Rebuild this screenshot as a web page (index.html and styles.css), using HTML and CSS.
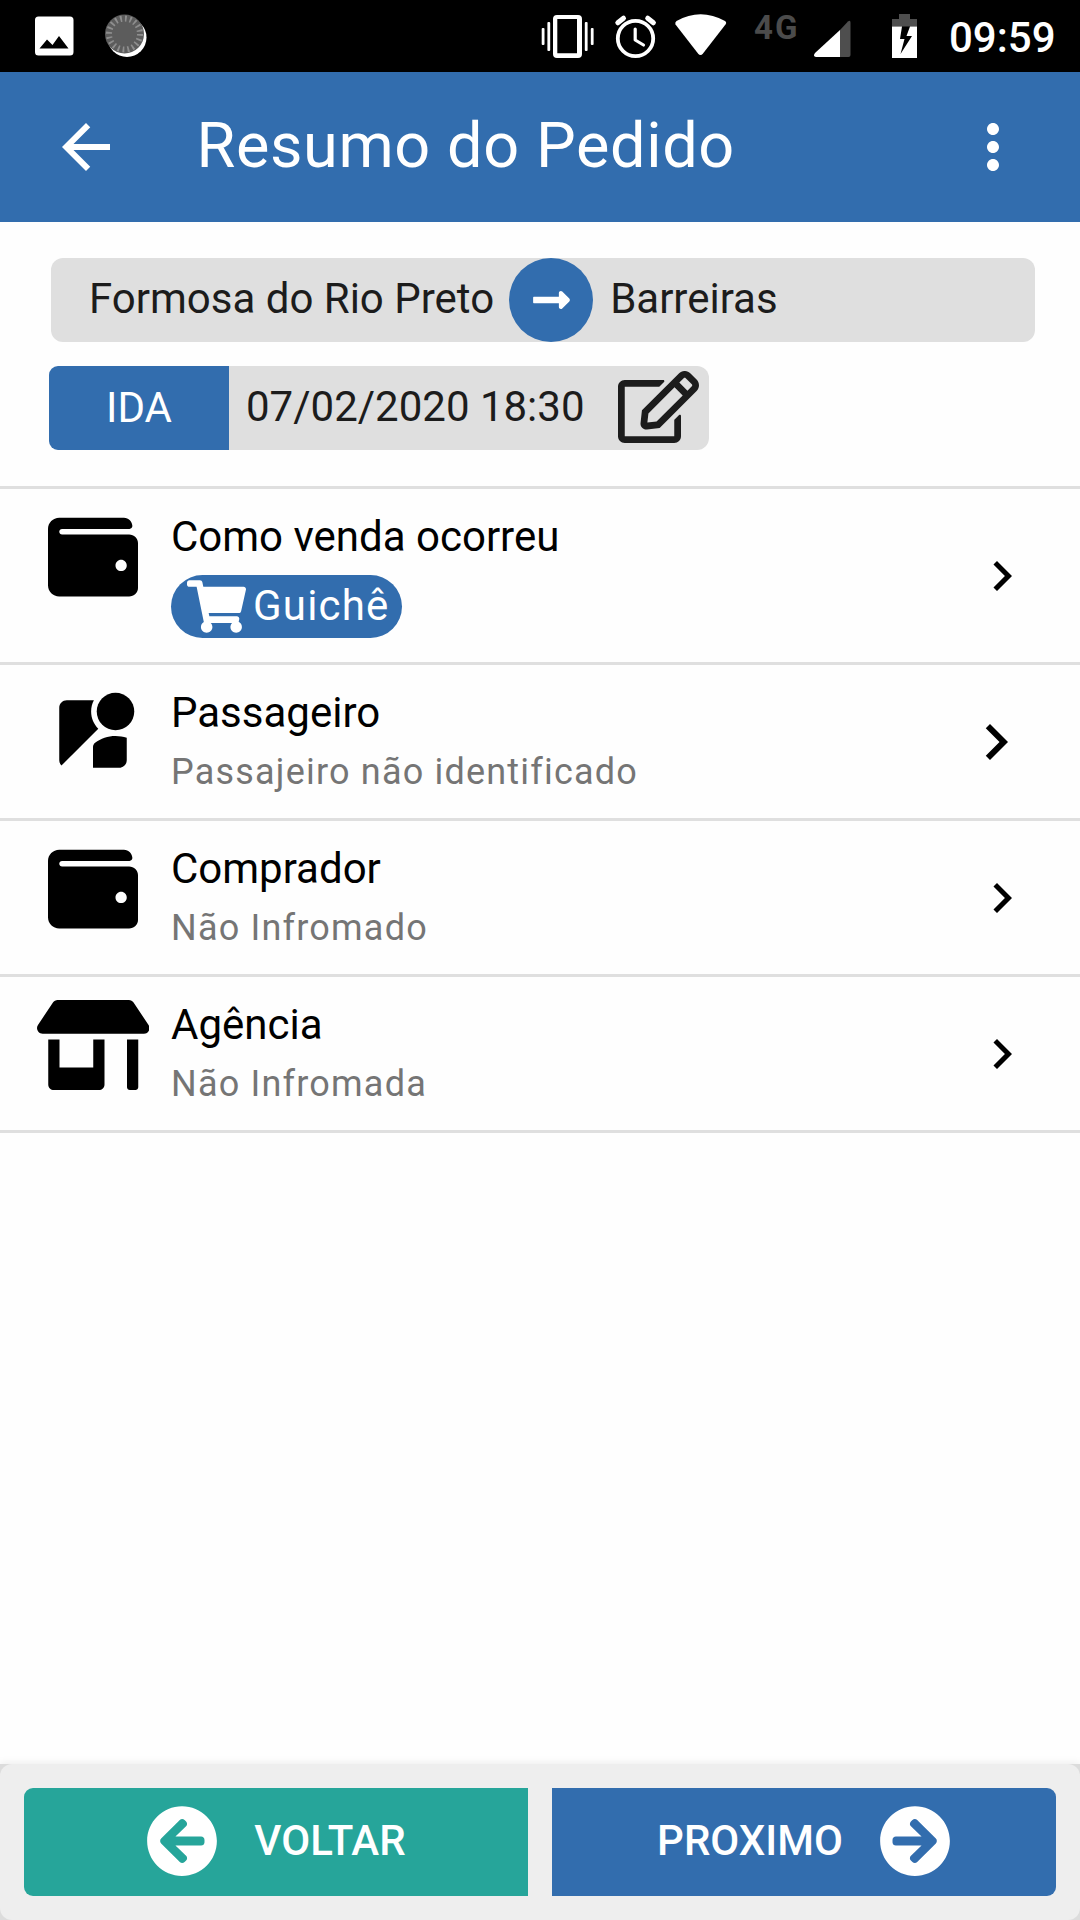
FILE: index.html
```html
<!DOCTYPE html>
<html lang="pt-BR">
<head>
<meta charset="utf-8">
<title>Resumo do Pedido</title>
<link rel="stylesheet" href="styles.css">
</head>
<body>
<svg width="0" height="0" class="defs" aria-hidden="true">
  <symbol id="wallet" viewBox="0 0 512 512"><path d="M461.2 128H80c-8.84 0-16-7.16-16-16s7.16-16 16-16h384c8.84 0 16-7.16 16-16 0-26.51-21.49-48-48-48H64C28.65 32 0 60.65 0 96v320c0 35.35 28.65 64 64 64h397.2c28.02 0 50.8-21.53 50.8-48V176c0-26.47-22.78-48-50.8-48zM416 336c-17.67 0-32-14.33-32-32s14.33-32 32-32 32 14.33 32 32-14.33 32-32 32z"/></symbol>
  <symbol id="chevron" viewBox="0 0 24 24"><path d="M10 6L8.59 7.41 13.17 12l-4.58 4.59L10 18l6-6z"/></symbol>
  <symbol id="circle-left" viewBox="0 0 512 512"><path d="M256 504C119 504 8 393 8 256S119 8 256 8s248 111 248 248-111 248-248 248zm28.9-143.6L209.4 288H392c13.3 0 24-10.7 24-24v-16c0-13.3-10.7-24-24-24H209.4l75.5-72.4c9.7-9.3 9.9-24.8.4-34.3l-11-10.9c-9.4-9.4-24.6-9.4-33.9 0L107.7 239c-9.4 9.4-9.4 24.6 0 33.9l132.7 132.7c9.4 9.4 24.6 9.4 33.9 0l11-10.9c9.5-9.5 9.3-25-.4-34.3z"/></symbol>
</svg>

<div class="status">
  <svg class="status-left" viewBox="34 0 120 72" width="120" height="72">
    <path fill="#fff" fill-rule="evenodd" d="M38.500 16.500h31.500a3.500 3.500 0 0 1 3.500 3.500v32a3.500 3.500 0 0 1-3.500 3.500h-31.500a3.500 3.500 0 0 1-3.500-3.500v-32a3.500 3.500 0 0 1 3.500-3.500zM39.500 48.500h29l-9.500-12.500-6.500 9-5.500-5.500z"/>
    <circle cx="127" cy="37.500" r="19.500" fill="#fff"/>
    <circle cx="124.500" cy="34" r="19.500" fill="#5c5c5c"/>
    <circle cx="124.500" cy="34" r="15.500" fill="none" stroke="#8e8e8e" stroke-width="6" stroke-dasharray="1.800 3.069"/>
  </svg>
  <div class="status-right">
    <svg class="status-icons" viewBox="540 0 190 72" width="190" height="72">
      <g fill="#fff">
        <path fill-rule="evenodd" d="M557 15h21a4 4 0 0 1 4 4v35a4 4 0 0 1-4 4h-21a4 4 0 0 1-4-4v-35a4 4 0 0 1 4-4zM557.300 19v34.200h19.700v-34.200z"/>
        <rect x="547.400" y="22" width="2.800" height="29" rx="1"/><rect x="541.700" y="28" width="2.800" height="17" rx="1"/>
        <rect x="584.800" y="22" width="2.800" height="29" rx="1"/><rect x="590.800" y="28" width="2.800" height="17" rx="1"/>
        <path d="M675.500 24.500Q674.500 22.500 676.500 21Q700.500 7.500 725 21Q727 22.500 725.500 24.500L703 53.500Q700.500 56.500 698 53.500z"/>
      </g>
      <g fill="none" stroke="#fff">
        <circle cx="635.500" cy="38.500" r="17.700" stroke-width="3.800"/>
        <path stroke-width="3.200" stroke-linecap="round" stroke-linejoin="round" d="M635.200 29v11l8.300 5"/>
        <path stroke-width="5" stroke-linecap="round" d="M617.800 22.800l5.700-4.600M653.400 22.800l-5.700-4.600"/>
      </g>
    </svg>
    <span class="net">4G</span>
    <svg class="status-icons" viewBox="806 0 114 72" width="114" height="72">
      <path fill="#4e4e4e" d="M840 30l8-8.500q2.500-2 2.500 1v32.500q0 2-2 2h-8.500z"/>
      <path fill="#fff" d="M840 30v27h-24q-3.500-.5-1-4z"/>
      <path fill="#4e4e4e" d="M899 14h11v5h7v7.500h-25v-7.500h7z"/>
      <path fill="#fff" fill-rule="evenodd" d="M892 26.500h25v31.500h-25zM902 26.500l-2 12.500h4.500l-4 15 11.500-18h-5.500l3.500-9.500z"/>
    </svg>
    <span class="clock">09:59</span>
  </div>
</div>

<header class="appbar">
  <svg viewBox="0 0 24 24" width="72" height="72"><path fill="#fff" d="M20 11H7.830l5.590-5.590L12 4l-8 8 8 8 1.410-1.410L7.830 13H20v-2z"/></svg>
  <h1>Resumo do Pedido</h1>
  <svg viewBox="0 0 24 24" width="72" height="72"><path fill="#fff" d="M12 8c1.100 0 2-.9 2-2s-.9-2-2-2-2 .9-2 2 .9 2 2 2zm0 2c-1.100 0-2 .9-2 2s.9 2 2 2 2-.9 2-2-.9-2-2-2zm0 6c-1.100 0-2 .9-2 2s.9 2 2 2 2-.9 2-2-.9-2-2-2z"/></svg>
</header>

<section class="trip">
  <div class="route">
    <span>Formosa do Rio Preto</span>
    <span class="route-arrow"><svg viewBox="0 0 448 512" width="37" height="42"><path fill="#fff" d="M313.941 216H12c-6.627 0-12 5.373-12 12v56c0 6.627 5.373 12 12 12h301.941v46.059c0 21.382 25.851 32.090 40.971 16.971l86.059-86.059c9.373-9.373 9.373-24.569 0-33.941l-86.059-86.059c-15.119-15.119-40.971-4.411-40.971 16.971V216z"/></svg></span>
    <span>Barreiras</span>
  </div>
  <div class="date">
    <span class="leg">IDA</span>
    <span class="when">07/02/2020 18:30</span>
    <svg viewBox="0 0 576 512" width="81" height="72"><path fill="#1c1c1c" d="M402.300 344.900l32-32c5-5 13.700-1.500 13.700 5.700V464c0 26.500-21.500 48-48 48H48c-26.500 0-48-21.500-48-48V112c0-26.500 21.500-48 48-48h273.500c7.100 0 10.700 8.600 5.700 13.700l-32 32c-1.500 1.500-3.500 2.300-5.700 2.300H48v352h352V350.500c0-2.100.8-4.100 2.300-5.600zm156.600-201.800L296.300 405.700l-90.400 10c-26.200 2.900-48.500-19.200-45.600-45.600l10-90.400L432.900 17.100c22.900-22.900 59.900-22.900 82.700 0l43.200 43.200c22.900 22.900 22.900 60 .1 82.800zM460.100 174L402 115.900 216.200 301.800l-7.300 65.300 65.300-7.300L460.100 174zm64.800-79.700l-43.200-43.200c-4.100-4.100-10.800-4.100-14.800 0L436 82l58.100 58.100 30.900-30.900c4-4.200 4-10.800-.1-14.900z"/></svg>
  </div>
</section>

<main class="list">
  <div class="row row-sale">
    <div class="icon"><svg width="90" height="90"><use href="#wallet"/></svg></div>
    <div class="text">
      <div class="title">Como venda ocorreu</div>
      <div class="chip">
        <svg viewBox="0 0 576 512" width="59" height="53"><path fill="#fff" d="M528.120 301.319l47.273-208C578.806 78.301 567.391 64 551.990 64H159.208l-9.166-44.810C147.758 8.021 137.930 0 126.529 0H24C10.745 0 0 10.745 0 24v16c0 13.255 10.745 24 24 24h69.883l70.248 343.435C147.325 417.100 136 435.222 136 456c0 30.928 25.072 56 56 56s56-25.072 56-56c0-15.674-6.447-29.835-16.824-40h209.647C430.447 426.165 424 440.326 424 456c0 30.928 25.072 56 56 56s56-25.072 56-56c0-22.172-12.888-41.332-31.579-50.405l5.517-24.276c3.413-15.018-8.002-29.319-23.403-29.319H218.117l-6.545-32h293.145c11.206 0 20.920-7.754 23.403-18.681z"/></svg>
        <span>Guichê</span>
      </div>
    </div>
    <svg class="chevron" width="60" height="60"><use href="#chevron"/></svg>
  </div>
  <div class="row">
    <div class="icon icon-person"><svg viewBox="0 0 24 24" width="90" height="90"><circle cx="18" cy="6" r="5"/><path d="M12.560 14.330c-.34.270-.56.700-.56 1.170V21h7c1.100 0 2-.9 2-2v-5.980c-.94-.33-1.950-.52-3-.52-2.030 0-3.930.7-5.440 1.830zM11.500 6c0-1.080.27-2.100.74-3H5c-1.100 0-2 .9-2 2v14c0 .55.23 1.050.59 1.410l9.820-9.820C12.230 9.420 11.500 7.800 11.500 6z"/></svg></div>
    <div class="text">
      <div class="title">Passageiro</div>
      <div class="sub">Passajeiro não identificado</div>
    </div>
    <svg class="chevron" width="72" height="72"><use href="#chevron"/></svg>
  </div>
  <div class="row">
    <div class="icon"><svg width="90" height="90"><use href="#wallet"/></svg></div>
    <div class="text">
      <div class="title">Comprador</div>
      <div class="sub">Não Infromado</div>
    </div>
    <svg class="chevron" width="60" height="60"><use href="#chevron"/></svg>
  </div>
  <div class="row">
    <div class="icon"><svg viewBox="0 0 640 512" width="112.500" height="90"><path d="M320 384H128V224H64v256c0 17.700 14.300 32 32 32h256c17.700 0 32-14.300 32-32V224h-64v160zm314.600-241.800l-85.300-128c-6-8.900-16-14.200-26.700-14.200H117.400c-10.700 0-20.700 5.300-26.600 14.200l-85.300 128c-14.200 21.300 1 49.800 26.600 49.800H608c25.500 0 40.700-28.500 26.600-49.800zM512 496c0 8.800 7.200 16 16 16h32c8.800 0 16-7.200 16-16V224h-64v272z"/></svg></div>
    <div class="text">
      <div class="title">Agência</div>
      <div class="sub">Não Infromada</div>
    </div>
    <svg class="chevron" width="60" height="60"><use href="#chevron"/></svg>
  </div>
</main>

<footer class="footer">
  <div class="actions">
    <div class="btn btn-back"><svg width="72" height="72"><use href="#circle-left"/></svg><span>VOLTAR</span></div>
    <div class="btn btn-next"><span>PROXIMO</span><svg class="flip" width="72" height="72"><use href="#circle-left"/></svg></div>
  </div>
</footer>
</body>
</html>
```
FILE: styles.css
```css
* { box-sizing: border-box; }
body {
  margin: 0;
  width: 1080px;
  height: 1920px;
  display: flex;
  flex-direction: column;
  background: #fefefe;
  color: #1c1c1c;
  font: 400 42px/48px Roboto, sans-serif;
  overflow: hidden;
}
svg { display: block; flex: none; }
.defs { position: absolute; }

.status {
  height: 72px;
  flex: none;
  display: flex;
  justify-content: space-between;
  background: #000;
  color: #fff;
}
.status-left { margin-left: 34px; }
.status-right { display: flex; }
.net {
  width: 52px;
  margin: 7px 0 0 24px;
  font-size: 33px;
  line-height: 42px;
  font-weight: 700;
  letter-spacing: 2px;
  color: #4b4b4b;
}
.clock {
  width: 131px;
  margin-left: 29px;
  line-height: 75px;
  font-weight: 500;
}

.appbar {
  height: 150px;
  flex: none;
  display: flex;
  align-items: center;
  padding: 0 51px 0 50px;
  background: #326dae;
  color: #fff;
}
.appbar h1 {
  flex: 1;
  margin: 0 0 0 74.500px;
  padding-bottom: 3px;
  font-size: 63px;
  line-height: 72px;
  font-weight: 400;
  letter-spacing: .62px;
}

.trip {
  flex: none;
  padding: 36px 45px 36px 49px;
  border-bottom: 3px solid #dfdfdf;
  height: 267px;
}
.route {
  display: flex;
  align-items: center;
  height: 84px;
  margin-left: 2px;
  padding-left: 38px;
  border-radius: 12px;
  background: #dfdfdf;
}
.route > span:not(.route-arrow) { padding-bottom: 3px; }
.route-arrow {
  width: 84px;
  height: 84px;
  margin: 0 17px 0 15px;
  padding-bottom: 1px;
  display: flex;
  align-items: center;
  justify-content: center;
  border-radius: 50%;
  background: #326dae;
}
.date {
  display: flex;
  align-items: center;
  width: 660px;
  height: 84px;
  margin-top: 24px;
  border-radius: 12px;
  background: #dfdfdf;
}
.date svg { margin-bottom: 2px; }
.leg {
  width: 180px;
  line-height: 84px;
  text-align: center;
  border-radius: 9px 0 0 9px;
  background: #326dae;
  color: #fff;
}
.when { width: 389px; padding: 0 0 3px 17px; }

.row {
  display: flex;
  height: 156px;
  padding-left: 48px;
  border-bottom: 3px solid #dfdfdf;
  color: #000;
}
.row-sale { height: 176px; }
.icon {
  width: 90px;
  margin-top: 23px;
  display: flex;
  justify-content: center;
  align-items: flex-start;
}
.icon-person { margin-top: 24px; }
.text { flex: 1; padding: 24px 0 0 33px; }
.sub {
  margin-top: 14px;
  font-size: 36px;
  line-height: 42px;
  letter-spacing: 1.200px;
  color: #757575;
}
.chip {
  display: flex;
  align-items: center;
  width: 231px;
  height: 63px;
  margin-top: 14px;
  padding-left: 16px;
  border-radius: 32px;
  background: #326dae;
  color: #fff;
  letter-spacing: 1.200px;
}
.chip span { margin-left: 7px; padding-bottom: 1px; }
.chevron { align-self: center; margin-right: 48px; }

.footer {
  flex: none;
  height: 156px;
  margin-top: auto;
  background: #dcdcdc;
  box-shadow: 0 0 9px rgba(0, 0, 0, .09);
}
.actions {
  display: flex;
  gap: 24px;
  height: 156px;
  padding: 24px;
  border-radius: 12px;
  background: #eee;
}
.btn {
  flex: 1;
  display: flex;
  align-items: center;
  justify-content: center;
  gap: 36px;
  padding-bottom: 2px;
  color: #fff;
  fill: #fff;
  font-weight: 500;
}
.btn-back { background: #26a59a; border-radius: 9px 0 0 9px; }
.btn-next { background: #326dae; border-radius: 0 9px 9px 0; }
.flip { transform: scaleX(-1); }
```
